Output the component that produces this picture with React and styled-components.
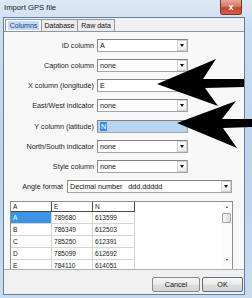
import React from "react";
import styled, { createGlobalStyle } from "styled-components";

const GlobalStyle = createGlobalStyle`
  html, body { margin: 0; padding: 0; width: 252px; height: 298px; overflow: hidden; background: #fff; }
  * { box-sizing: border-box; }
`;

const Frame = styled.div`
  position: relative;
  width: 252px;
  height: 298px;
  display: flex;
  flex-direction: column;
  padding: 0 7px 3px 3px;
  background: linear-gradient(180deg, #dde8f4 0%, #cbdcef 10%, #bfd3ea 55%, #c9dbee 100%);
  font-family: "Liberation Sans", Arial, sans-serif;
  overflow: hidden;
`;

const TitleBar = styled.div`
  height: 17px;
  display: flex;
  align-items: flex-start;
  justify-content: space-between;
`;

const Title = styled.div`
  padding: 3px 0 0 1px;
  font-size: 7.7px;
  color: #1b1b1b;
`;

const CloseBtn = styled.div`
  width: 22px;
  height: 15px;
  margin-right: 3px;
  border: 1px solid #7d3026;
  border-top: none;
  border-radius: 0 0 3px 3px;
  background: linear-gradient(180deg, #e7a796 0%, #d47a66 45%, #c2442e 55%, #d0664c 100%);
  display: flex;
  align-items: center;
  justify-content: center;
  color: #fff;
  font-size: 9px;
  font-weight: bold;
  line-height: 1;
`;

const Client = styled.div`
  flex: 1;
  display: flex;
  flex-direction: column;
  border: 1px solid #5f7fa6;
  background: #f0f0f0;
`;

const TabStrip = styled.div`
  display: flex;
  padding: 1px 0 0 1px;
  height: 13px;
`;

const Tab = styled.div`
  width: ${(p) => p.$w}px;
  height: 12px;
  margin-right: -1px;
  border: 1px solid #9199a3;
  border-bottom: none;
  background: ${(p) => (p.$active ? "#fbfbfb" : "#ececec")};
  display: flex;
  align-items: center;
  justify-content: center;
  font-size: 7px;
  color: #111;
`;

const TabLabel = styled.span`
  padding: 0 2px;
  line-height: 9px;
  background: ${(p) => (p.$active ? "#c3dbf3" : "transparent")};
  color: ${(p) => (p.$active ? "#163d82" : "#111")};
`;

const Panel = styled.div`
  height: 239px;
  display: flex;
  flex-direction: column;
  border-top: 1px solid #8c96a2;
  border-bottom: 1px solid #a9b0b8;
  background: #f8f8f8;
  padding-top: 7px;
  overflow: hidden;
`;

const Form = styled.div`
  display: flex;
  flex-direction: column;
  gap: 7.14px;
`;

const Row = styled.div`
  display: flex;
  align-items: center;
  height: 13px;
  gap: ${(p) => p.$gap || 3}px;
`;

const Label = styled.div`
  width: ${(p) => p.$w || 90}px;
  text-align: right;
  font-size: 7.2px;
  color: #222;
  white-space: nowrap;
`;

const Field = styled.div`
  width: ${(p) => p.$w || 91}px;
  height: 13px;
  display: flex;
  align-items: center;
  border: 1px solid #a4a4a4;
  border-top-color: #828282;
  border-left-color: #8c8c8c;
  background: ${(p) => (p.$focus ? "#b9d6f0" : "#fff")};
  font-size: 7.2px;
  color: #111;
  padding-left: 2px;
`;

const FieldText = styled.span`
  flex: 1;
  white-space: pre;
  overflow: hidden;
`;

const Selected = styled.span`
  background: #3b8fe3;
  color: #fff;
  padding: 0 1px;
`;

const DropBtn = styled.div`
  width: 10px;
  height: 11px;
  margin-right: 0;
  border: 1px solid #d2d2d2;
  background: linear-gradient(180deg, #ffffff, #ececec);
  display: flex;
  align-items: center;
  justify-content: center;
  &::after {
    content: "";
    border-left: 2.5px solid transparent;
    border-right: 2.5px solid transparent;
    border-top: 3px solid #111;
  }
`;

const TableBox = styled.div`
  margin: 8px 0 0 6px;
  width: 223px;
  height: 69px;
  border: 1px solid #8a8f96;
  border-bottom: none;
  background: #fff;
  display: flex;
  overflow: hidden;
`;

const Grid = styled.div`
  flex: 1;
  display: grid;
  grid-template-columns: 41px 41px 42px;
  grid-auto-rows: 12px;
  grid-template-rows: 10px;
  align-content: start;
`;

const Cell = styled.div`
  font-size: 6.6px;
  color: ${(p) => (p.$sel ? "#fff" : "#222")};
  background: ${(p) => (p.$sel ? "#3d93e4" : "#fff")};
  border-right: 1px solid ${(p) => (p.$head ? "#4a4a4a" : "#d4d4d4")};
  border-bottom: 1px solid ${(p) => (p.$head ? "#4a4a4a" : "#d4d4d4")};
  display: flex;
  align-items: center;
  padding-left: 2px;
`;

const ScrollBar = styled.div`
  width: 11px;
  display: flex;
  flex-direction: column;
  align-items: center;
  background: #fbfbfb;
  padding-bottom: 4px;
`;

const ScrollArrow = styled.div`
  height: 10px;
  display: flex;
  align-items: center;
  justify-content: center;
  &::after {
    content: "";
    border-left: 1.5px solid transparent;
    border-right: 1.5px solid transparent;
    ${(p) => (p.$up ? "border-bottom: 2px solid #444;" : "border-top: 2px solid #444;")}
  }
`;

const Thumb = styled.div`
  width: 9px;
  height: 10px;
  margin-top: 1px;
  border: 1px solid #a8a8a8;
  border-radius: 1px;
  background: linear-gradient(90deg, #f4f4f4, #dcdcdc);
`;

const Spacer = styled.div`
  flex: 1;
`;

const ButtonRow = styled.div`
  display: flex;
  justify-content: flex-end;
  gap: 2px;
  padding: 7px 1px 0 0;
`;

const Button = styled.div`
  width: ${(p) => p.$w}px;
  height: 15px;
  border: 1px solid ${(p) => (p.$default ? "#5e6f83" : "#8a8a8a")};
  border-radius: 2px;
  background: linear-gradient(180deg, #f5f5f5 0%, #ececec 48%, #dedede 52%, #d3d3d3 100%);
  display: flex;
  align-items: center;
  justify-content: center;
  font-size: 7.2px;
  color: #111;
`;

const ArrowLayer = styled.svg`
  position: absolute;
  left: 0;
  top: 0;
  pointer-events: none;
`;

const fields = [
  { label: "ID column", value: "A", combo: true },
  { label: "Caption column", value: "none", combo: true },
  { label: "X column (longitude)", value: "E", combo: false },
  { label: "East/West indicator", value: "none", combo: true },
  { label: "Y column (latitude)", value: "N", combo: false, focus: true },
  { label: "North/South indicator", value: "none", combo: true },
  { label: "Style column", value: "none", combo: true },
];

const rows = [
  ["A", "789680", "613599"],
  ["B", "786349", "612503"],
  ["C", "785250", "612391"],
  ["D", "785099", "612692"],
  ["E", "784110", "614051"],
];

export default function App() {
  return (
    <>
      <GlobalStyle />
      <Frame>
        <TitleBar>
          <Title>Import GPS file</Title>
          <CloseBtn>x</CloseBtn>
        </TitleBar>
        <Client>
          <TabStrip>
            <Tab $w={37} $active>
              <TabLabel $active>Columns</TabLabel>
            </Tab>
            <Tab $w={37}>
              <TabLabel>Database</TabLabel>
            </Tab>
            <Tab $w={38}>
              <TabLabel>Raw data</TabLabel>
            </Tab>
          </TabStrip>
          <Panel>
            <Form>
              {fields.map((f) => (
                <Row key={f.label}>
                  <Label>{f.label}</Label>
                  <Field $focus={f.focus}>
                    <FieldText>
                      {f.focus ? <Selected>{f.value}</Selected> : f.value}
                    </FieldText>
                    {f.combo && <DropBtn />}
                  </Field>
                </Row>
              ))}
              <Row $gap={4}>
                <Label $w={59}>Angle format</Label>
                <Field $w={165}>
                  <FieldText>{"Decimal number   ddd.ddddd"}</FieldText>
                  <DropBtn />
                </Field>
              </Row>
            </Form>
            <TableBox>
              <Grid>
                <Cell $head>A</Cell>
                <Cell $head>E</Cell>
                <Cell $head>N</Cell>
                {rows.map((r, i) =>
                  r.map((v, j) => (
                    <Cell key={`${i}-${j}`} $sel={i === 0 && j === 0}>
                      {v}
                    </Cell>
                  ))
                )}
              </Grid>
              <ScrollBar>
                <ScrollArrow $up />
                <Thumb />
                <Spacer />
                <ScrollArrow />
              </ScrollBar>
            </TableBox>
          </Panel>
          <ButtonRow>
            <Button $w={48}>Cancel</Button>
            <Button $w={41} $default>
              OK
            </Button>
          </ButtonRow>
        </Client>
        <ArrowLayer width="252" height="298" viewBox="0 0 252 298">
          <polygon points="157,84 216,59 203,79 244,79 244,87 205,88 218,106" fill="#000" />
          <polygon points="177,123 236,101 222,119 252,119 252,127 223,128 237,148" fill="#000" />
        </ArrowLayer>
      </Frame>
    </>
  );
}
